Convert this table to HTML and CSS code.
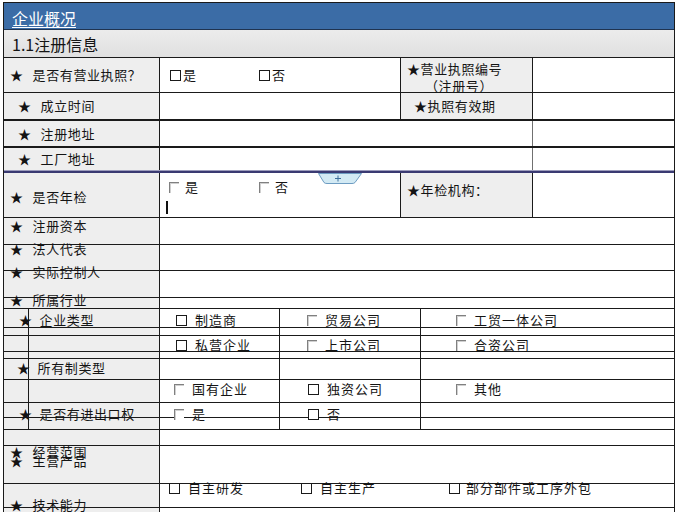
FILE: index.html
```html
<!DOCTYPE html>
<html lang="zh-CN">
<head>
<meta charset="utf-8">
<title>企业概况</title>
<link rel="stylesheet" href="styles.css">
</head>
<body>
<div class="sheet">
  <div class="title"><span>企业概况</span></div>
  <div class="section">1.1注册信息</div>

  <div class="row quad h-a">
    <div class="cell lab mid"><span class="star">★</span>是否有营业执照？</div>
    <div class="cell opts mid opts-a">
      <span class="opt w89"><i class="box"></i><b class="g2">是</b></span>
      <span class="opt"><i class="box"></i><b class="g2">否</b></span>
    </div>
    <div class="cell lab2 two-line">★营业执照编号<br><span class="sub">（注册号）</span></div>
    <div class="cell"></div>
  </div>

  <div class="row quad h-b thick">
    <div class="cell lab mid in14"><span class="star">★</span>成立时间</div>
    <div class="cell"></div>
    <div class="cell lab2 mid in13">★执照有效期</div>
    <div class="cell"></div>
  </div>

  <div class="row wide h-c thick">
    <div class="cell lab mid in14"><span class="star">★</span>注册地址</div>
    <div class="cell soft"></div>
    <div class="cell"></div>
  </div>

  <div class="row wide h-d pale">
    <div class="cell lab mid in14"><span class="star">★</span>工厂地址</div>
    <div class="cell soft"></div>
    <div class="cell"></div>
  </div>
  <div class="rule"></div>

  <div class="row quad h-e">
    <div class="cell lab mid low"><span class="star">★</span>是否年检</div>
    <div class="cell stack">
      <div class="opts opts-e">
        <span class="opt w90"><i class="tick"></i><b class="g6">是</b></span>
        <span class="opt"><i class="tick"></i><b class="g6">否</b></span>
      </div>
      <span class="caret"></span>
    </div>
    <div class="cell lab2 top10">★年检机构：</div>
    <div class="cell"></div>
  </div>

  <div class="row full h-f">
    <div class="cell lab"><span class="txt up-1"><span class="star">★</span>注册资本</span></div>
    <div class="cell"></div>
  </div>
  <div class="row full h-g">
    <div class="cell lab"><span class="txt up-3"><span class="star">★</span>法人代表</span></div>
    <div class="cell"></div>
  </div>
  <div class="row full h-h">
    <div class="cell lab"><span class="txt up-6"><span class="star">★</span>实际控制人</span></div>
    <div class="cell"></div>
  </div>
  <div class="row full h-i">
    <div class="cell lab"><span class="txt up-5"><span class="star">★</span>所属行业</span></div>
    <div class="cell"></div>
  </div>

  <div class="row split h-j">
    <div class="cell sublab"><span class="txt dn-4"><span class="star">★</span>企业类型</span></div>
    <div class="cell"></div>
    <div class="cell ocell p16"><span class="opt dn-4"><i class="box"></i><b class="g9">制造商</b></span></div>
    <div class="cell ocell p27"><span class="opt dn-4"><i class="tick"></i><b class="g9">贸易公司</b></span></div>
    <div class="cell ocell p35"><span class="opt dn-4"><i class="tick"></i><b class="g9">工贸一体公司</b></span></div>
  </div>
  <div class="row split h-k">
    <div class="cell sublab"></div><div class="cell"></div><div class="cell"></div><div class="cell"></div><div class="cell"></div>
  </div>
  <div class="row split h-l">
    <div class="cell sublab"></div>
    <div class="cell"></div>
    <div class="cell ocell p16"><span class="opt dn-2"><i class="box"></i><b class="g9">私营企业</b></span></div>
    <div class="cell ocell p27"><span class="opt dn-2"><i class="tick"></i><b class="g9">上市公司</b></span></div>
    <div class="cell ocell p35"><span class="opt dn-2"><i class="tick"></i><b class="g9">合资公司</b></span></div>
  </div>
  <div class="row split h-m">
    <div class="cell sublab"></div><div class="cell"></div><div class="cell"></div><div class="cell"></div><div class="cell"></div>
  </div>
  <div class="row split h-n">
    <div class="cell sublab"><span class="txt dn-2 in-n"><span class="star">★</span>所有制类型</span></div>
    <div class="cell"></div><div class="cell"></div><div class="cell"></div><div class="cell"></div>
  </div>
  <div class="row split h-o">
    <div class="cell sublab"></div>
    <div class="cell"></div>
    <div class="cell ocell p14"><span class="opt dn-2"><i class="tick"></i><b class="g9">国有企业</b></span></div>
    <div class="cell ocell p28"><span class="opt dn-2"><i class="box"></i><b class="g9">独资公司</b></span></div>
    <div class="cell ocell p35"><span class="opt dn-2"><i class="tick"></i><b class="g9">其他</b></span></div>
  </div>
  <div class="row split h-p">
    <div class="cell sublab"><span class="txt dn-4"><span class="star">★</span>是否有进出口权</span></div>
    <div class="cell"></div>
    <div class="cell ocell p14"><span class="opt dn-4"><i class="tick"></i><b class="g9">是</b></span></div>
    <div class="cell ocell p28"><span class="opt dn-4"><i class="box"></i><b class="g9">否</b></span></div>
    <div class="cell"></div>
  </div>
  <div class="row split h-q">
    <div class="cell sublab"></div><div class="cell"></div><div class="cell"></div><div class="cell"></div><div class="cell"></div>
  </div>

  <div class="row full h-r">
    <div class="cell lab"></div>
    <div class="cell"></div>
  </div>
  <div class="row full h-s">
    <div class="cell lab dup"><span class="star">★</span>经营范围<br><span class="star">★</span>主营产品</div>
    <div class="cell"></div>
  </div>
  <div class="row full h-t">
    <div class="cell lab"><span class="txt dn-14"><span class="star">★</span>技术能力</span></div>
    <div class="cell opts opts-t">
      <span class="opt w132"><i class="box"></i><b class="g9">自主研发</b></span>
      <span class="opt w148"><i class="box"></i><b class="g9">自主生产</b></span>
      <span class="opt"><i class="box"></i><b class="g6">部分部件或工序外包</b></span>
    </div>
  </div>
  <div class="row full h-u">
    <div class="cell lab"></div>
    <div class="cell"></div>
  </div>

  <svg class="handle" width="44" height="12" viewBox="0 0 44 12" aria-hidden="true">
    <path d="M0.5 0.5 H43.5 L37 9.5 Q36 10.5 34 10.5 H9 Q7 10.5 6 9.5 Z" fill="#d3eaf4" stroke="#6d9cc2"/>
    <path d="M20 2.5 V8.5 M17 5.5 H23" stroke="#3d6f9c" stroke-width="1"/>
  </svg>
</div>
</body>
</html>
```

FILE: styles.css
```css
* { box-sizing: border-box; }

html, body {
  margin: 0;
  background: #ffffff;
}

body {
  font-family: "Noto Sans CJK SC", "Noto Sans", sans-serif;
  font-size: 13px;
  color: #141414;
  letter-spacing: 0.6px;
}

.sheet {
  position: relative;
  margin: 2px 0 0 3px;
  width: 672px;
  height: 510px;
  overflow: hidden;
  border: 1px solid #1a1a1a;
  border-bottom: 0;
}

.title {
  height: 27px;
  background: #3b6ca6;
  border-bottom: 1px solid #1f3350;
  padding: 6px 0 0 8px;
  color: #ffffff;
  font-size: 16px;
  line-height: 18px;
  letter-spacing: 0;
}
.title span {
  text-decoration: underline;
  text-underline-offset: 2px;
}

.section {
  height: 28px;
  background: linear-gradient(180deg, #ececec 0%, #e0e0e0 100%);
  border-bottom: 1px solid #1a1a1a;
  padding-left: 8px;
  display: flex;
  align-items: center;
  font-size: 16px;
  letter-spacing: 0;
}

/* rows */
.row {
  display: grid;
  grid-template-rows: minmax(0, 1fr);
  border-bottom: 1px solid #1a1a1a;
  background: linear-gradient(90deg, #eeeeee 155px, #ffffff 155px);
  line-height: 14px;
}
.row.thick { border-bottom-width: 2px; }
.row.pale { border-bottom-color: #9c9cbc; }

.quad  { grid-template-columns: 156px 241px 132px 141px; }
.wide  { grid-template-columns: 156px 373px 141px; }
.full  { grid-template-columns: 156px 514px; }
.split { grid-template-columns: 25px 131px 120px 141px 253px; }

.cell {
  border-right: 1px solid #1a1a1a;
  min-width: 0;
  min-height: 0;
  white-space: nowrap;
}
.cell:last-child { border-right: 0; }
.cell.soft { border-right-color: #707070; }

.rule {
  height: 2px;
  background: #3a3a72;
}

/* heights */
.h-a { height: 35px; }
.h-b { height: 28px; }
.h-c { height: 27px; }
.h-d { height: 23px; }
.h-e { height: 45px; }
.h-f { height: 27px; }
.h-g { height: 26px; }
.h-h { height: 27px; }
.h-i { height: 11px; }
.h-j { height: 19px; }
.h-k { height: 8px; }
.h-l { height: 16px; }
.h-m { height: 7px; }
.h-n { height: 21px; }
.h-o { height: 23px; }
.h-p { height: 15px; }
.h-q { height: 12px; }
.h-r { height: 16px; }
.h-s { height: 38px; }
.h-t { height: 24px; }
.h-u { height: 20px; }

/* label cells */
.lab { padding-left: 6px; }
.lab.in14 { padding-left: 14px; }
.lab.mid { display: flex; align-items: center; }
.lab.low { padding-top: 4px; }
.sublab { padding-left: 15px; }
.txt { display: block; }
.in-n { margin-left: -2px; }

.star { margin-right: 9px; }
.sublab .star { margin-right: 7px; }

.lab2 {
  background: #eeeeee;
  padding-left: 6px;
}
.lab2.mid { display: flex; align-items: center; }
.lab2.in13 { padding-left: 13px; }
.lab2.top10 { padding-top: 10px; }
.two-line {
  padding-top: 2px;
  line-height: 17px;
}
.two-line .sub { margin-left: 18px; }

.dup {
  padding-top: 1px;
  line-height: 9px;
}

/* vertical nudges */
.up-1 { margin-top: 1px; }
.up-3 { margin-top: -3px; }
.up-6 { margin-top: -6px; }
.up-5 { margin-top: -5px; }
.dn-2 { margin-top: 2px; }
.dn-4 { margin-top: 4px; }
.dn-14 { margin-top: 14px; }

/* options */
.opts { display: flex; }
.opts.mid { align-items: center; }
.opts-a { padding-left: 10px; }
.opts-e { padding: 7px 0 0 9px; }
.opts-t { padding-left: 9px; margin-top: -3px; align-items: flex-start; }

.stack { display: block; }
.caret {
  display: block;
  width: 2px;
  height: 13px;
  margin: 7px 0 0 6px;
  background: #111111;
}

.ocell { display: block; }
.p14 { padding-left: 14px; }
.p16 { padding-left: 16px; }
.p27 { padding-left: 27px; }
.p28 { padding-left: 28px; }
.p35 { padding-left: 35px; }

.opt {
  display: flex;
  align-items: center;
  flex: none;
}
.opt b { font-weight: normal; letter-spacing: 1px; }
.w89 { width: 89px; }
.w90 { width: 90px; }
.w132 { width: 132px; }
.w148 { width: 148px; }
.g2 { margin-left: 2px; }
.g6 { margin-left: 6px; }
.g9 { margin-left: 8px; }

.box {
  display: block;
  width: 11px;
  height: 11px;
  border: 1px solid #1a1a1a;
  background: #ffffff;
  flex: none;
}
.tick {
  display: block;
  width: 10px;
  height: 11px;
  border-top: 1px solid #808080;
  border-left: 1px solid #808080;
  box-shadow: inset 1px 1px 0 #d0d0d0;
  background: #ffffff;
  flex: none;
}

.handle {
  position: absolute;
  left: 314px;
  top: 170px;
}
```
